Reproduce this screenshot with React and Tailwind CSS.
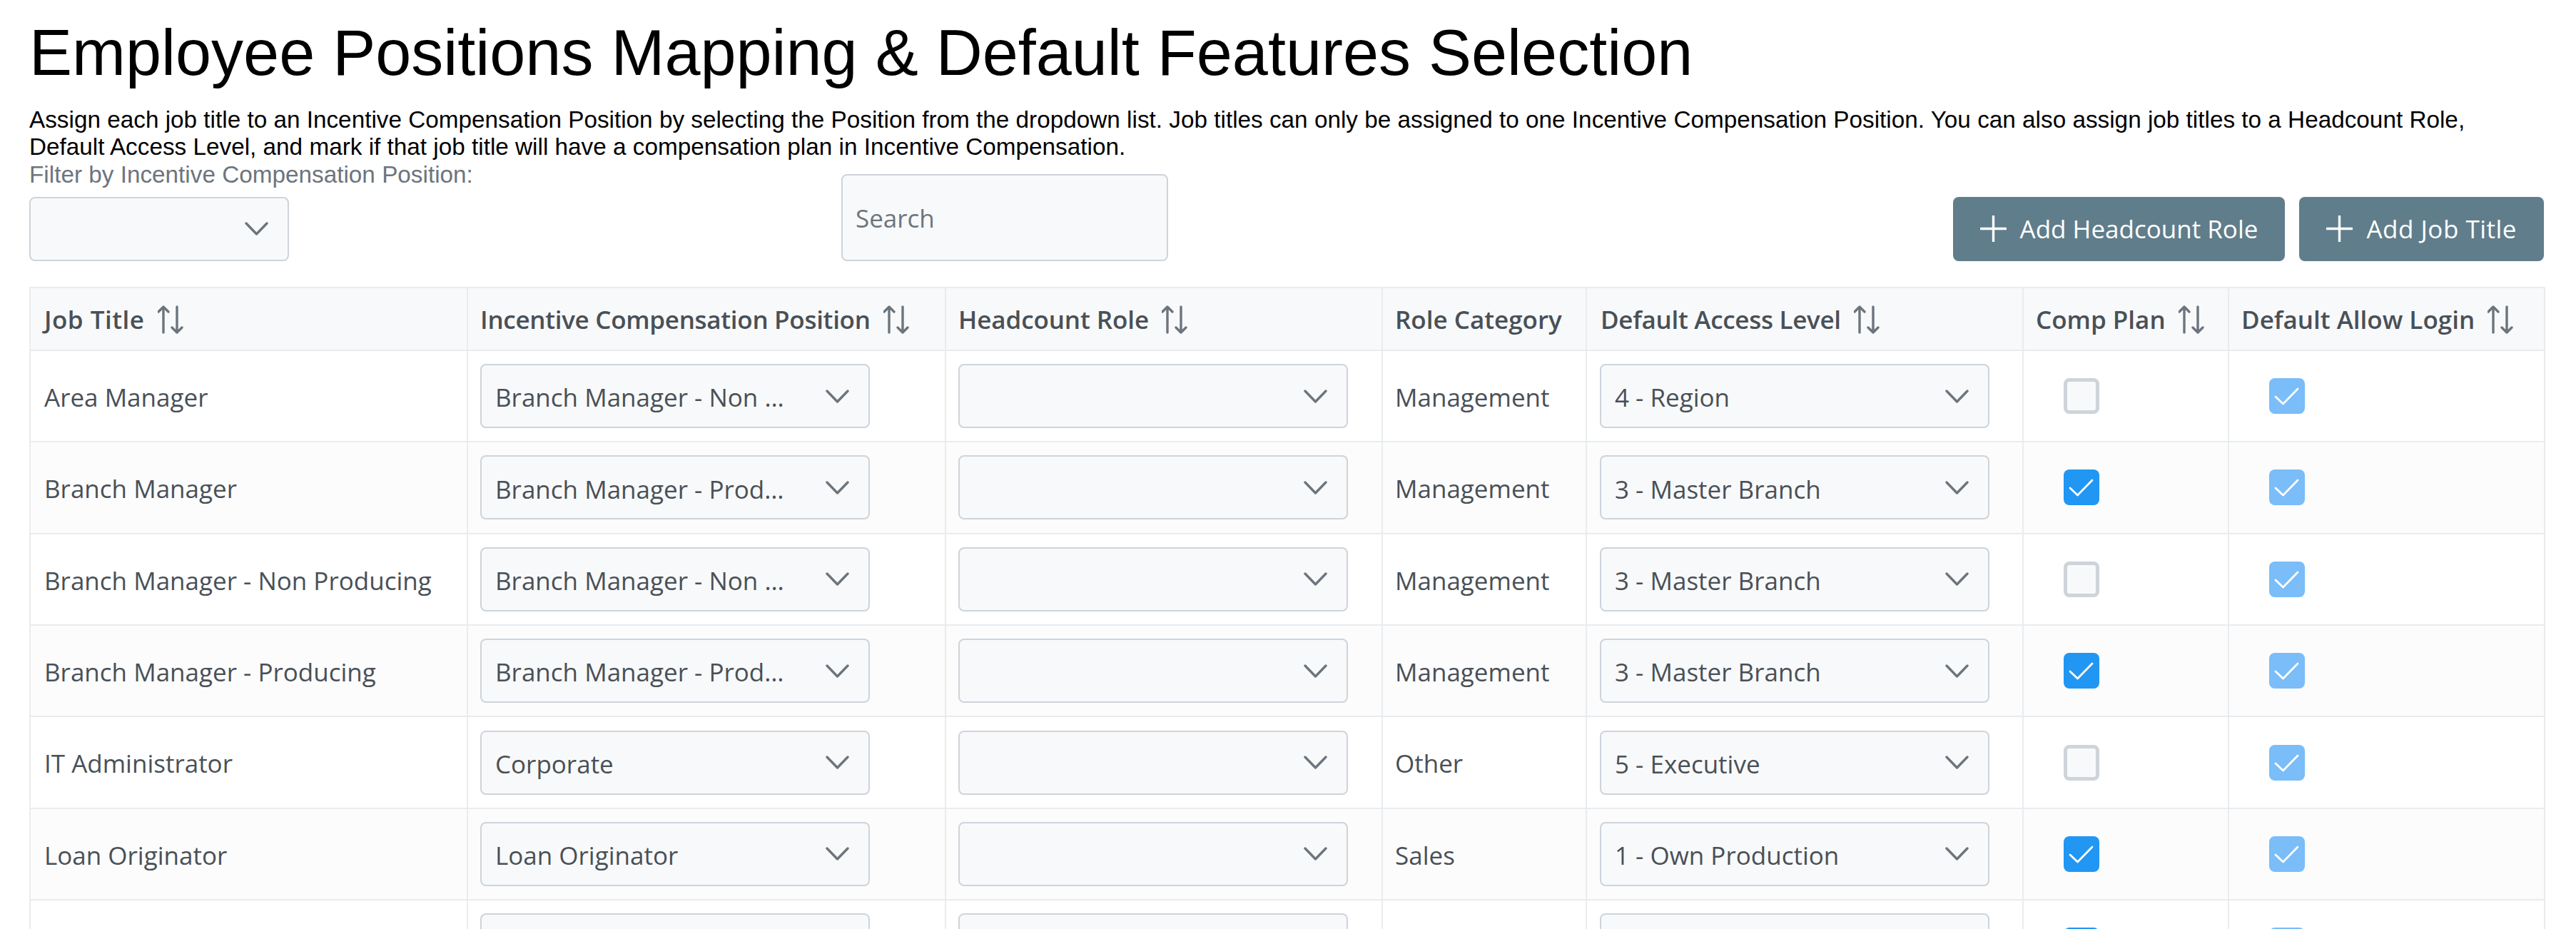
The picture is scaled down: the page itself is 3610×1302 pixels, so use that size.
import React from "react";

function SortIcon() {
  return (
    <svg width="36" height="40" viewBox="0 0 36 40" fill="none" stroke="#6c757d" strokeWidth="3.4" strokeLinecap="round" strokeLinejoin="round" className="shrink-0">
      <path d="M8 2v36M1 9l7-7 7 7" />
      <path d="M27 2v36M20 31l7 7 7-7" />
    </svg>
  );
}

function Chevron() {
  return (
    <svg width="33" height="19" viewBox="0 0 33 19" fill="none" stroke="#6c757d" strokeWidth="3.4" strokeLinecap="round" strokeLinejoin="round" className="shrink-0">
      <path d="M2 2l14.5 15L31 2" />
    </svg>
  );
}

function Plus() {
  return (
    <svg width="37" height="37" viewBox="0 0 37 37" fill="none" stroke="#ffffff" strokeWidth="3.4" strokeLinecap="round" className="shrink-0">
      <path d="M18.5 1v35M1 18.5h35" />
    </svg>
  );
}

function Dropdown({ value, w }) {
  return (
    <div className={"flex items-center justify-between h-[90px] rounded-lg border-2 border-[#ced4da] bg-[#f8f9fa] pl-[19px] pr-[27px] " + w}>
      <span className="truncate w-[408px] pt-[5px]">{value}</span>
      <Chevron />
    </div>
  );
}

function Check({ checked, dim }) {
  if (!checked) {
    return <div className="w-[50px] h-[50px] rounded-lg border-[5px] border-[#ced4da] bg-[#f8f9fa]" />;
  }
  return (
    <div className={"w-[50px] h-[50px] rounded-lg flex items-center justify-center " + (dim ? "bg-[#7abdf8]" : "bg-[#2196f3]")}>
      <svg width="50" height="50" viewBox="0 0 50 50" fill="none" stroke="#ffffff" strokeWidth="2.8" strokeLinecap="round" strokeLinejoin="round">
        <path d="M9 26l10.5 10L40 15" />
      </svg>
    </div>
  );
}

const headers = [
  ["Job Title", true, "tracking-[0.5px] pl-[19px]"],
  ["Incentive Compensation Position", true, "tracking-[-0.3px]"],
  ["Headcount Role", true, "tracking-[-0.1px]"],
  ["Role Category", false, "tracking-[0px]"],
  ["Default Access Level", true, "tracking-[-0.3px] pl-[19px]"],
  ["Comp Plan", true, "tracking-[0px]"],
  ["Default Allow Login", true, "tracking-[0px]"],
];

const rows = [
  ["Area Manager", "Branch Manager - Non Producing", "Management", "4 - Region", false],
  ["Branch Manager", "Branch Manager - Producing", "Management", "3 - Master Branch", true],
  ["Branch Manager - Non Producing", "Branch Manager - Non Producing", "Management", "3 - Master Branch", false],
  ["Branch Manager - Producing", "Branch Manager - Producing", "Management", "3 - Master Branch", true],
  ["IT Administrator", "Corporate", "Other", "5 - Executive", false],
  ["Loan Originator", "Loan Originator", "Sales", "1 - Own Production", true],
  ["", "", "", "", true],
];

const td = "border-2 border-[#e9ecef] px-[17px] align-middle";

export default function App() {
  return (
    <div className="h-[1302px] overflow-hidden bg-white pl-[41px] pr-[45px] font-['Liberation_Sans',Arial,sans-serif] text-black">
      <h1 className="pt-[22px] text-[90px] leading-[105px] font-normal">
        Employee Positions Mapping &amp; Default Features Selection
      </h1>
      <p className="mt-[22px] text-[33.3px] leading-[38.4px]">
        Assign each job title to an Incentive Compensation Position by selecting the Position from the dropdown list. Job titles can only be assigned to one Incentive Compensation Position. You can also assign job titles to a Headcount Role, Default Access Level, and mark if that job title will have a compensation plan in Incentive Compensation.
      </p>
      <div className="flex items-end h-[140px] font-['Open_Sans',sans-serif] text-[#495057] text-[35px]">
        <div className="w-[1138px] flex flex-col h-full">
          <div className="font-['Liberation_Sans',Arial,sans-serif] text-[33.3px] leading-[38px] text-[#6c757d]">
            Filter by Incentive Compensation Position:
          </div>
          <div className="mt-auto">
            <Dropdown value="" w="w-[364px]" />
          </div>
        </div>
        <div className="w-[458px] h-[122px] rounded-lg border-2 border-[#ced4da] bg-[#f8f9fa] flex items-center px-[18px] pt-[2px] text-[#6c757d]">
          Search
        </div>
        <div className="ml-auto flex gap-[20px] text-white text-[35px]">
          <div className="h-[90px] rounded-lg bg-[#607d8b] flex items-center pl-[38px] pr-[38px] gap-[19px]">
            <Plus />
            <span>Add Headcount Role</span>
          </div>
          <div className="h-[90px] rounded-lg bg-[#607d8b] flex items-center pl-[38px] pr-[38px] gap-[19px]">
            <Plus />
            <span className="tracking-[0.5px]">Add Job Title</span>
          </div>
        </div>
      </div>
      <table className="mt-[36px] w-[3524px] table-fixed border-collapse font-['Open_Sans',sans-serif] text-[35px] text-[#495057]">
        <colgroup>
          <col className="w-[613px]" />
          <col className="w-[670px]" />
          <col className="w-[612px]" />
          <col className="w-[286px]" />
          <col className="w-[612px]" />
          <col className="w-[288px]" />
          <col className="w-[443px]" />
        </colgroup>
        <thead>
          <tr className="h-[88px] bg-[#f8f9fa]">
            {headers.map(([label, sortable, track]) => (
              <th key={label} className={td + " text-left font-semibold pt-[3px] " + track}>
                <div className="flex items-center gap-[18px] whitespace-nowrap">
                  <span>{label}</span>
                  {sortable && <SortIcon />}
                </div>
              </th>
            ))}
          </tr>
        </thead>
        <tbody>
          {rows.map((r, i) => (
            <tr key={i} className={"h-[128.4px] " + (i % 2 === 1 ? "bg-[#fcfcfc]" : "bg-white")}>
              <td className={td + " pl-[19px] pt-[4px]"}>{r[0]}</td>
              <td className={td}><Dropdown value={r[1]} w="w-[546px]" /></td>
              <td className={td}><Dropdown value="" w="w-[546px]" /></td>
              <td className={td + " pt-[4px]"}>{r[2]}</td>
              <td className={td + " pl-[18px]"}><Dropdown value={r[3]} w="w-[546px]" /></td>
              <td className={td + " pl-[56px]"}><Check checked={r[4]} /></td>
              <td className={td + " pl-[56px]"}><Check checked dim /></td>
            </tr>
          ))}
        </tbody>
      </table>
    </div>
  );
}
